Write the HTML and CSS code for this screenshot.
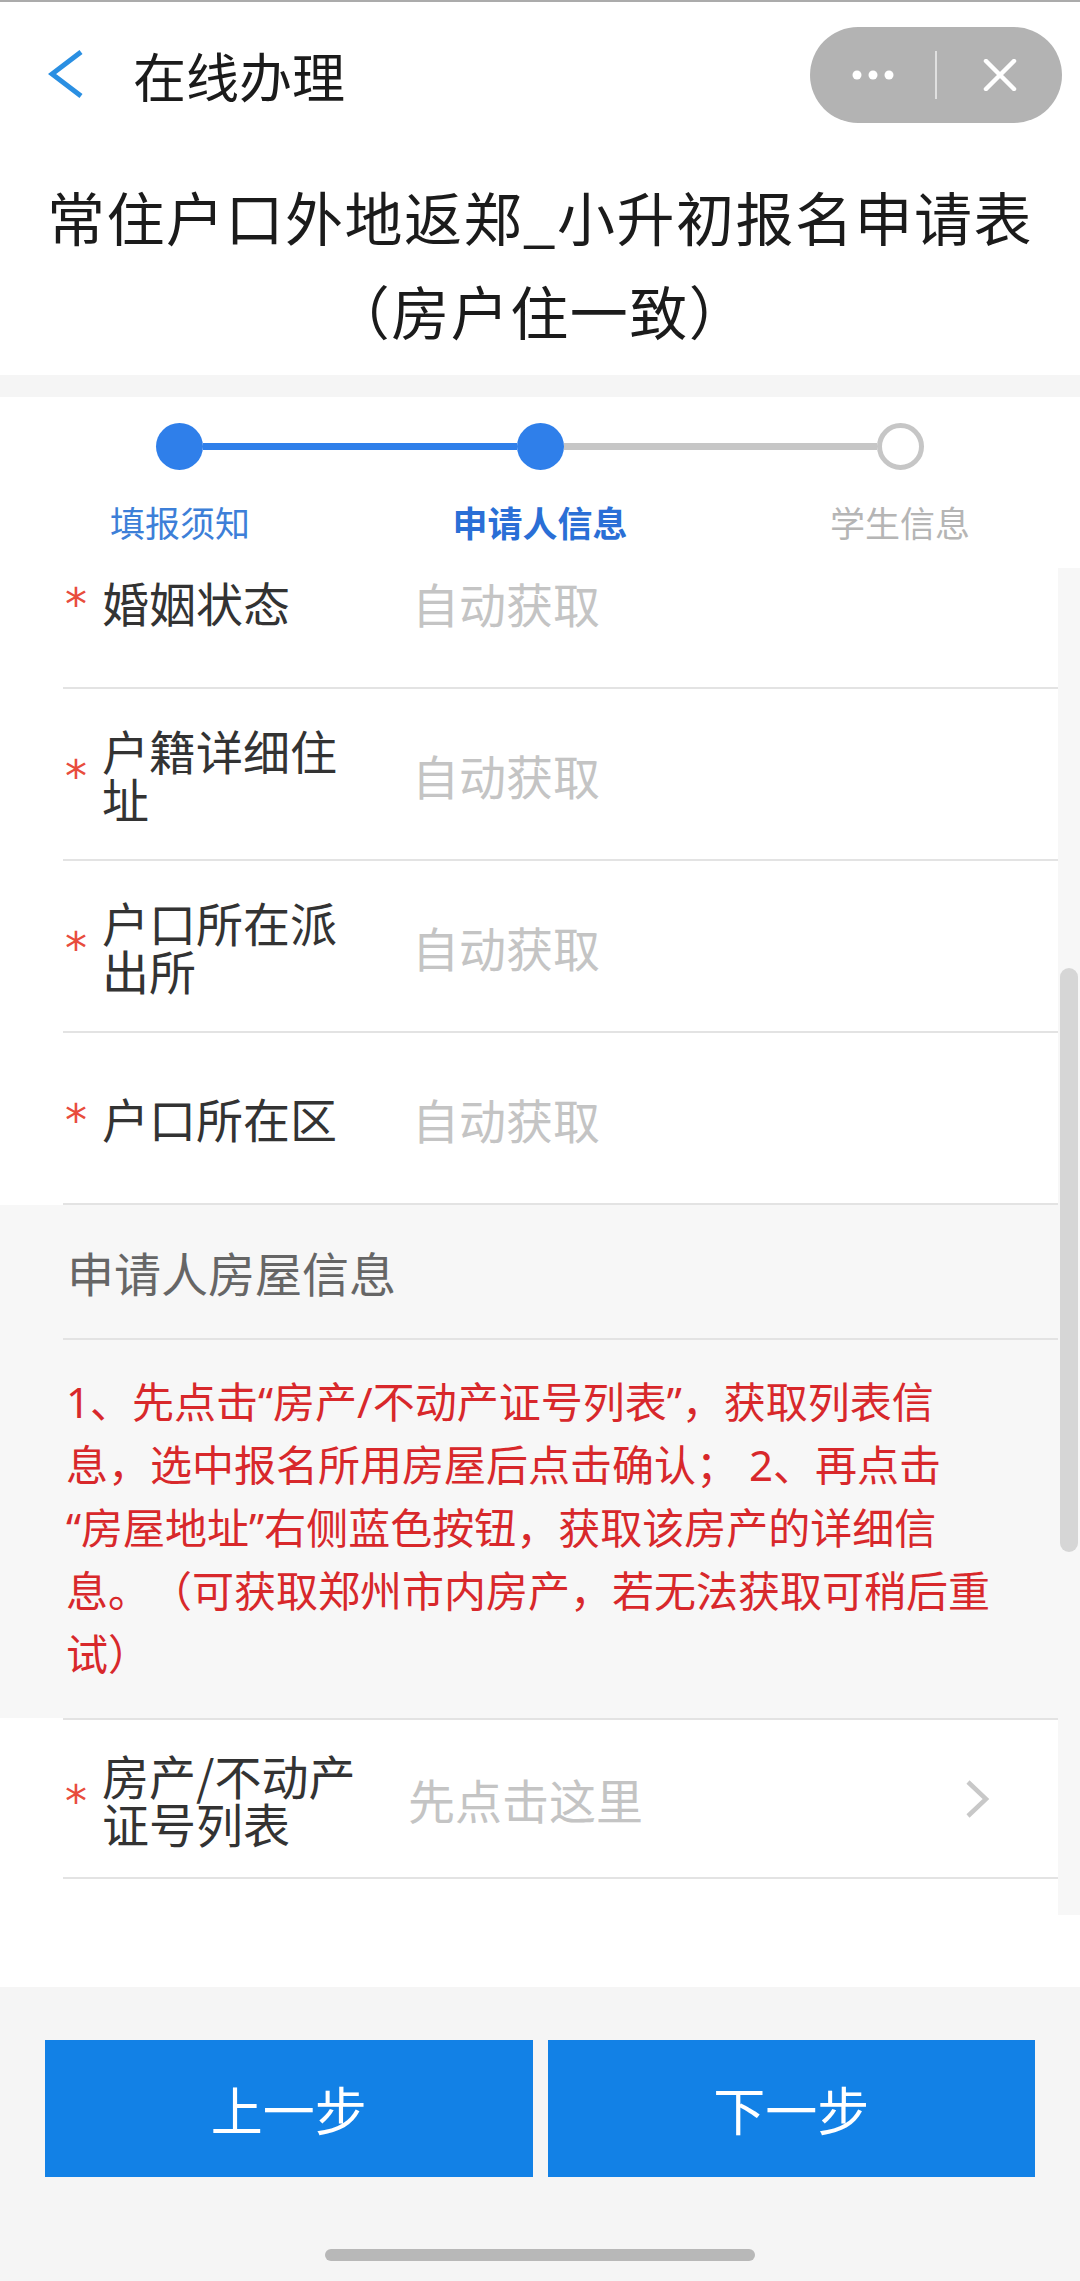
FILE: index.html
```html
<!DOCTYPE html>
<html lang="zh-CN">
<head>
    <meta charset="UTF-8">
    <meta name="viewport" content="width=device-width, initial-scale=1.0">
    <title>在线办理</title>
    <link rel="stylesheet" href="styles.css">
</head>
<body>
    <div class="page">
        <div class="nav">
            <svg class="back" viewBox="0 0 36 50" width="36" height="50">
                <polyline points="33,2 4,24 33,46" fill="none" stroke="#2a8fe2" stroke-width="5"/>
            </svg>
            <span class="nav-title">在线办理</span>
            <div class="capsule">
                <span class="capsule-btn">
                    <svg viewBox="0 0 44 12" width="44" height="12">
                        <circle cx="6" cy="6" r="4.5" fill="#fff"/>
                        <circle cx="22" cy="6" r="4.5" fill="#fff"/>
                        <circle cx="38" cy="6" r="4.5" fill="#fff"/>
                    </svg>
                </span>
                <span class="capsule-line"></span>
                <span class="capsule-btn">
                    <svg viewBox="0 0 34 32" width="34" height="32">
                        <path d="M3 2 L31 30 M31 2 L3 30" stroke="#fff" stroke-width="4.5" stroke-linecap="round"/>
                    </svg>
                </span>
            </div>
        </div>
        <h1 class="form-title">常住户口外地返郑_小升初报名申请表（房户住一致）</h1>
        <div class="band"></div>

        <div class="steps">
            <div class="steps-track">
                <span class="dot"></span>
                <span class="bar bar-on"></span>
                <span class="dot"></span>
                <span class="bar"></span>
                <span class="dot dot-todo"></span>
            </div>
            <div class="steps-labels">
                <span class="step-done">填报须知</span>
                <span class="step-current">申请人信息</span>
                <span>学生信息</span>
            </div>
        </div>

        <div class="scroll">
            <div class="scroll-body">
                <div class="field">
                    <span class="req">*</span>
                    <span class="field-label">婚姻状态</span>
                    <span class="field-value">自动获取</span>
                </div>
                <div class="field">
                    <span class="req">*</span>
                    <span class="field-label">户籍详细住址</span>
                    <span class="field-value">自动获取</span>
                </div>
                <div class="field">
                    <span class="req">*</span>
                    <span class="field-label">户口所在派出所</span>
                    <span class="field-value">自动获取</span>
                </div>
                <div class="field">
                    <span class="req">*</span>
                    <span class="field-label">户口所在区</span>
                    <span class="field-value">自动获取</span>
                </div>
                <div class="group">
                    <div class="group-title">申请人房屋信息</div>
                    <p class="group-tip">1、先点击“房产/不动产证号列表”，获取列表信息，选中报名所用房屋后点击确认； 2、再点击“房屋地址”右侧蓝色按钮，获取该房产的详细信息。（可获取郑州市内房产，若无法获取可稍后重试）</p>
                </div>
                <div class="field field-picker">
                    <span class="req">*</span>
                    <span class="field-label">房产/不动产证号列表</span>
                    <span class="field-value">先点击这里</span>
                    <svg class="arrow" viewBox="0 0 26 40" width="26" height="40">
                        <polyline points="4,3 22,20 4,37" fill="none" stroke="#c8c8c8" stroke-width="4.5"/>
                    </svg>
                </div>
            </div>
            <div class="scroll-bar"><span class="scroll-thumb"></span></div>
        </div>
        <div class="bottom-gap"></div>

        <div class="footer">
            <div class="footer-btns">
                <button class="btn">上一步</button>
                <button class="btn">下一步</button>
            </div>
            <div class="home-bar"></div>
        </div>
    </div>
</body>
</html>
```

FILE: styles.css
```css
body {
    margin: 0;
    font-family: "Noto Sans CJK SC", "Noto Sans", sans-serif;
    background-color: #fff;
    color: #333;
}
.page {
    width: 1080px;
    height: 2281px;
    overflow: hidden;
    display: flex;
    flex-direction: column;
}
.nav {
    height: 146px;
    border-top: 2px solid #ababab;
    display: flex;
    align-items: center;
    padding: 0 18px 0 48px;
}
.back {
    flex-shrink: 0;
}
.nav-title {
    flex: 1;
    margin-left: 49px;
    font-size: 53px;
    line-height: 1;
    color: #1b1b1b;
}
.capsule {
    width: 252px;
    height: 96px;
    border-radius: 48px;
    background-color: #b3b3b3;
    display: flex;
    align-items: center;
}
.capsule-btn {
    flex: 1;
    display: flex;
    justify-content: center;
}
.capsule-line {
    width: 2px;
    height: 48px;
    background-color: #e0e0e0;
}
.form-title {
    margin: 21px 0 0;
    padding: 0 30px 18px;
    font-size: 58px;
    letter-spacing: 1.5px;
    line-height: 94px;
    font-weight: normal;
    text-align: center;
    color: #1b1b1b;
}
.band {
    height: 22px;
    background-color: #f5f5f5;
}
.steps {
    height: 171px;
    padding-top: 26px;
    box-sizing: border-box;
}
.steps-track {
    display: flex;
    align-items: center;
    padding: 0 156px;
}
.dot {
    width: 47px;
    height: 47px;
    border-radius: 50%;
    background-color: #2f7fea;
    box-sizing: border-box;
}
.dot-todo {
    background-color: #fff;
    border: 5px solid #c6c6c6;
}
.bar {
    flex: 1;
    height: 7px;
    background-color: #c6c6c6;
}
.bar-on {
    background-color: #2f7fea;
}
.steps-labels {
    display: grid;
    grid-template-columns: repeat(3, 1fr);
    margin-top: 27px;
    font-size: 35px;
    line-height: 50px;
    text-align: center;
    color: #b5b5b5;
}
.step-done {
    color: #3d7fd8;
}
.step-current {
    color: #2a6fd6;
    font-weight: bold;
}
.scroll {
    height: 1347px;
    display: flex;
    overflow: hidden;
}
.scroll-body {
    flex: 1;
    margin-top: -51px;
    background-color: #fff;
}
.scroll-bar {
    width: 22px;
    background-color: #f7f7f7;
    display: flex;
    flex-direction: column;
    align-items: center;
}
.scroll-thumb {
    margin-top: 400px;
    width: 18px;
    height: 584px;
    border-radius: 9px;
    background-color: #d6d6d6;
}
.field {
    display: flex;
    align-items: center;
    height: 172px;
    margin-left: 63px;
    border-bottom: 2px solid #e3e3e3;
    box-sizing: border-box;
}
.req {
    width: 37px;
    padding: 6px 0 0 2px;
    font-family: "DejaVu Sans", sans-serif;
    font-size: 44px;
    line-height: 44px;
    color: #e84c3d;
}
.field-label {
    width: 262px;
    font-size: 47px;
    line-height: 48px;
    color: #333;
}
.field-value {
    margin-left: 48px;
    font-size: 47px;
    color: #c4c4c4;
}
.group {
    background-color: #f7f7f7;
}
.group-title {
    height: 135px;
    margin-left: 63px;
    padding-left: 4px;
    border-bottom: 2px solid #e3e3e3;
    box-sizing: border-box;
    display: flex;
    align-items: center;
    font-size: 47px;
    color: #666;
}
.group-tip {
    margin: 0;
    padding: 30px 61px 33px 66px;
    font-family: "Noto Sans", "Noto Sans CJK SC", sans-serif;
    font-size: 42px;
    line-height: 63px;
    color: #d8282b;
    text-spacing-trim: space-all;
}
.field-picker {
    height: 161px;
    border-top: 2px solid #e3e3e3;
}
.field-picker .field-value {
    margin-left: 44px;
}
.arrow {
    margin-left: auto;
    margin-right: 68px;
}
.bottom-gap {
    height: 72px;
}
.footer {
    flex: 1;
    background-color: #f5f5f5;
    padding: 53px 45px 0;
}
.footer-btns {
    display: flex;
    gap: 15px;
}
.btn {
    flex: 1;
    height: 137px;
    border: none;
    background-color: #1281e6;
    color: #fff;
    font-family: inherit;
    font-size: 52px;
}
.home-bar {
    width: 430px;
    height: 12px;
    border-radius: 6px;
    background-color: #b8b8b8;
    margin: 72px auto 0;
}
```
